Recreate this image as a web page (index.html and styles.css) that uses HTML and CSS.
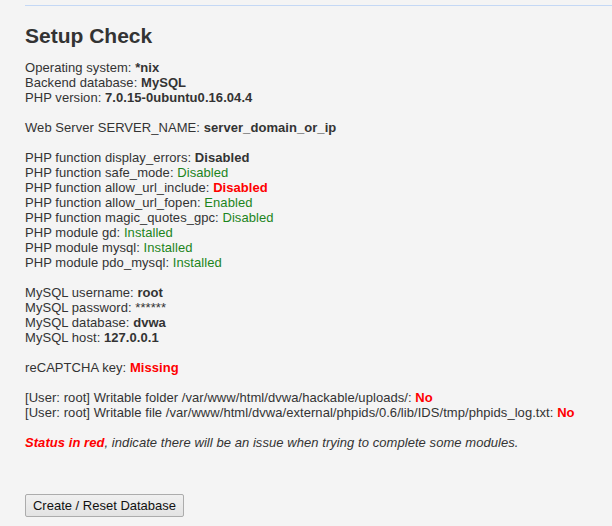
FILE: index.html
```html
<!DOCTYPE html>
<html>
<head>
<meta charset="utf-8">
<link rel="stylesheet" href="styles.css">
</head>
<body>
<div class="main">
  <div class="rule"></div>
  <h1 class="title">Setup Check</h1>
  <div class="report">
    <div>Operating system: <b>*nix</b></div>
    <div>Backend database: <b>MySQL</b></div>
    <div>PHP version: <b>7.0.15-0ubuntu0.16.04.4</b></div>
    <div class="gap"></div>
    <div>Web Server SERVER_NAME: <b>server_domain_or_ip</b></div>
    <div class="gap"></div>
    <div>PHP function display_errors: <b>Disabled</b></div>
    <div>PHP function safe_mode: <span class="ok">Disabled</span></div>
    <div>PHP function allow_url_include: <span class="bad">Disabled</span></div>
    <div>PHP function allow_url_fopen: <span class="ok">Enabled</span></div>
    <div>PHP function magic_quotes_gpc: <span class="ok">Disabled</span></div>
    <div>PHP module gd: <span class="ok">Installed</span></div>
    <div>PHP module mysql: <span class="ok">Installed</span></div>
    <div>PHP module pdo_mysql: <span class="ok">Installed</span></div>
    <div class="gap"></div>
    <div>MySQL username: <b>root</b></div>
    <div>MySQL password: ******</div>
    <div>MySQL database: <b>dvwa</b></div>
    <div>MySQL host: <b>127.0.0.1</b></div>
    <div class="gap"></div>
    <div>reCAPTCHA key: <span class="bad">Missing</span></div>
    <div class="gap"></div>
    <div>[User: root] Writable folder /var/www/html/dvwa/hackable/uploads/: <span class="bad">No</span></div>
    <div>[User: root] Writable file /var/www/html/dvwa/external/phpids/0.6/lib/IDS/tmp/phpids_log.txt: <span class="bad">No</span></div>
    <div class="gap"></div>
    <div class="note"><span class="bad">Status in red</span>, indicate there will be an issue when trying to complete some modules.</div>
  </div>
  <form class="setup-form">
    <button type="button" class="btn">Create / Reset Database</button>
  </form>
</div>
</body>
</html>
```
FILE: styles.css
```css
html, body {
  margin: 0;
  padding: 0;
  background: #f4f4f4;
}
body {
  font-family: "Liberation Sans", Arial, sans-serif;
  font-size: 13px;
  color: #333;
}
.main {
  padding: 5px 0 0 25px;
}
.rule {
  height: 0;
  border-top: 1px solid #c4d8f5;
}
.title {
  margin: 18px 0 12px 0;
  font-size: 21px;
  line-height: 24px;
  font-weight: bold;
  color: #333;
}
.report {
  line-height: 15px;
  letter-spacing: 0.06px;
}
.report b {
  font-weight: bold;
}
.gap {
  height: 15px;
}
.ok {
  color: #1c841c;
}
.bad {
  color: #f00;
  font-weight: bold;
}
.note {
  font-style: italic;
}
.setup-form {
  margin: 44px 0 0 0;
}
.btn {
  font-family: "Liberation Sans", Arial, sans-serif;
  font-size: 13px;
  color: #111;
  height: 23px;
  width: 159px;
  padding: 0 6px;
  border: 1px solid #acacac;
  border-radius: 2px;
  background: linear-gradient(#f0f0f0, #e3e3e3);
  line-height: 21px;
}
```
